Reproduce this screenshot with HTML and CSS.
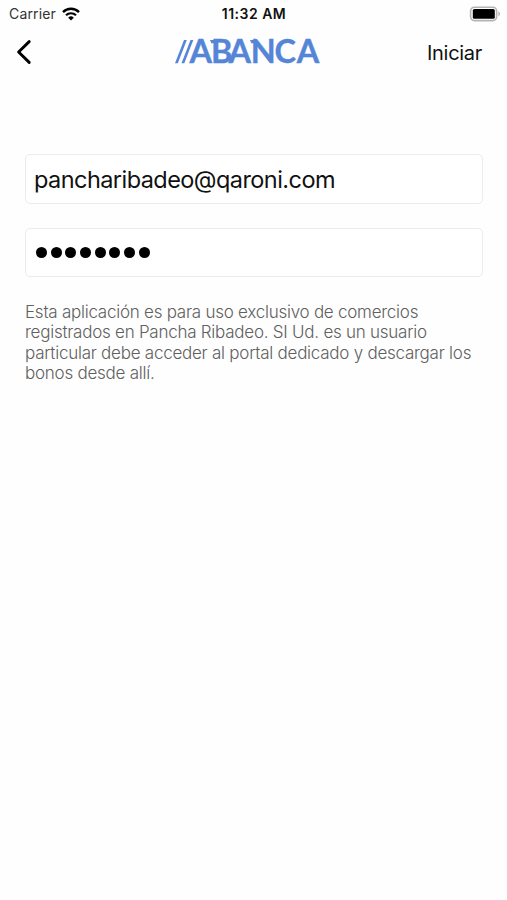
FILE: index.html
```html
<!DOCTYPE html>
<html lang="es">
<head>
  <meta charset="UTF-8">
  <meta name="viewport" content="width=device-width, initial-scale=1.0">
  <title>ABANCA</title>
  <link rel="stylesheet" href="styles.css">
</head>
<body>
  <div class="status-bar">
    <div class="carrier">
      <span class="carrier-name">Carrier</span>
      <svg class="wifi" width="18" height="14" viewBox="0 0 18 14">
        <path d="M1 5.1a11.4 11.4 0 0 1 16 0" fill="none" stroke="#000" stroke-width="2.4"/>
        <path d="M4 8.3a7.1 7.1 0 0 1 10 0" fill="none" stroke="#000" stroke-width="2.2"/>
        <path d="M6.2 10.7a4 4 0 0 1 5.6 0L9 13.6z"/>
      </svg>
    </div>
    <span class="clock">11:32 AM</span>
    <svg class="battery" width="32" height="16" viewBox="0 0 32 16">
      <rect x="1.6" y="1.2" width="26" height="13.4" rx="3.8" fill="#fff" stroke="#b4b4b4" stroke-width="1.6"/>
      <rect x="3.8" y="3" width="22" height="9.8" rx="1.6"/>
      <path d="M29.4 5.3c2.2 1.3 2.2 3.9 0 5.2z" fill="#b4b4b4"/>
    </svg>
  </div>

  <header class="nav">
    <button class="back" aria-label="Atrás">
      <svg width="18" height="26" viewBox="0 0 18 26">
        <path d="M15.2 2.6 4.6 13l10.6 10.4" fill="none" stroke="#000" stroke-width="2.9" stroke-linecap="round" stroke-linejoin="round"/>
      </svg>
    </button>
    <svg class="logo" width="146" height="40" viewBox="0 0 146 40">
      <path d="M0 31.3 9 8h2.8l-9 23.3zM6.5 31.3l9-23.3h2.8l-9 23.3z"/>
      <text x="14.5 36 53.5 75.8 99.5 121.8" y="31.3">ABANCA</text>
      <path d="M35 8h6v3.2h-4.6zM75 8h5v3.2h-3.6z"/>
    </svg>
    <button class="start">Iniciar</button>
  </header>

  <form class="login">
    <input class="field" type="text" value="pancharibadeo@qaroni.com" spellcheck="false">
    <div class="field password">
      <i></i><i></i><i></i><i></i><i></i><i></i><i></i><i></i>
    </div>
    <p class="note">Esta aplicación es para uso exclusivo de comercios<br>registrados en Pancha Ribadeo. SI Ud. es un usuario<br>particular debe acceder al portal dedicado y descargar los<br>bonos desde allí.</p>
  </form>
</body>
</html>
```
FILE: styles.css
```css
* {
  margin: 0;
  padding: 0;
  box-sizing: border-box;
}

body {
  font-family: Inter, "Liberation Sans", sans-serif;
  background: #fefefe;
  color: #111;
  height: 100vh;
  overflow: hidden;
}

.status-bar {
  display: grid;
  grid-template-columns: 1fr auto 1fr;
  align-items: center;
  height: 27px;
  padding: 0 6px 0 9px;
}

.carrier {
  display: flex;
  align-items: center;
  gap: 6px;
}

.carrier-name {
  font-size: 14px;
  letter-spacing: 0.15px;
  color: #333;
}

.clock {
  margin-left: -2px;
  font-size: 14px;
  font-weight: 600;
  letter-spacing: 0.5px;
}

.battery {
  justify-self: end;
}

.nav {
  display: grid;
  grid-template-columns: 161px 146px 1fr;
  align-items: center;
  height: 50px;
  padding: 0 25px 0 14px;
}

.nav button {
  background: none;
  border: none;
  font-family: inherit;
  color: #111;
}

.back {
  width: 68px;
  height: 26px;
  text-align: left;
}

.back svg,
.logo {
  display: block;
}

.logo {
  overflow: visible;
  fill: #5585d6;
}

.logo text {
  font-family: Lato, sans-serif;
  font-size: 32.4px;
  font-weight: 700;
  stroke: #5585d6;
  stroke-width: 0.4px;
}

.nav .start {
  justify-self: end;
  padding-top: 1px;
  font-size: 20px;
  letter-spacing: -0.3px;
}

.login {
  display: flex;
  flex-direction: column;
  padding: 77px 24px 0 25px;
}

.field {
  width: 100%;
  height: 50px;
  margin-bottom: 24px;
  padding: 0 8px;
  border: 1px solid #ebebeb;
  border-radius: 5px;
  background: #fff;
  font-family: inherit;
  font-size: 23.5px;
  letter-spacing: -0.56px;
  color: #111;
  outline: none;
}

.password {
  display: flex;
  align-items: center;
  gap: 3.7px;
  height: 49px;
  margin-bottom: 25px;
  padding-left: 10px;
}

.password i {
  width: 11px;
  height: 11px;
  border-radius: 50%;
  background: #000;
}

.note {
  font-size: 17px;
  font-weight: 300;
  line-height: 20.4px;
  letter-spacing: -0.25px;
  white-space: nowrap;
  color: #606060;
}
```
